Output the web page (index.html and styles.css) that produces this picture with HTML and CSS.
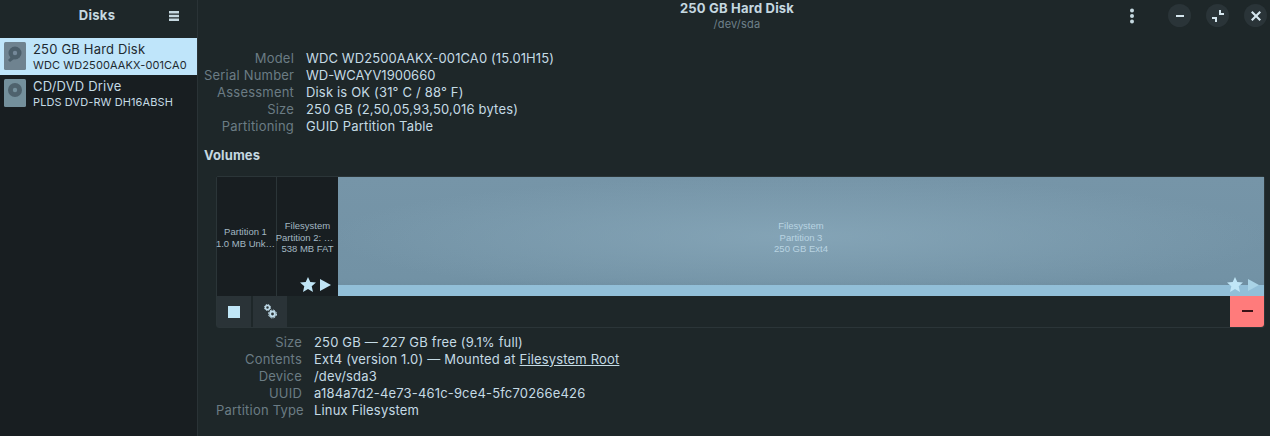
FILE: index.html
```html
<!DOCTYPE html>
<html lang="en">
<head>
  <meta charset="UTF-8" />
  <title>Disks</title>
  <link rel="stylesheet" href="styles.css">
</head>
<body>
  <div class="app">

    <!-- Disk list -->
    <aside class="sidebar">
      <header class="side-head">
        <span class="side-title">Disks</span>
        <svg class="burger" width="10" height="10" viewBox="0 0 10 10"><path d="M0 0h10v2.400H0zM0 3.800h10v2.400H0zM0 7.600h10V10H0z" fill="#c5d8e0"/></svg>
      </header>
      <div class="disk selected">
        <svg class="disk-icon" width="22" height="29" viewBox="0 0 22 29">
          <rect width="22" height="28" rx="1.5" fill="#6f8390"/>
          <circle cx="11" cy="11" r="6.500" fill="#4c5f6b"/>
          <circle cx="11" cy="11" r="2.200" fill="#75899a"/>
          <path d="M7 15l-3 3 2 2 4-3z" fill="#4c5f6b"/>
        </svg>
        <div class="disk-text">
          <div class="disk-name">250 GB Hard Disk</div>
          <div class="disk-model">WDC WD2500AAKX-001CA0</div>
        </div>
      </div>
      <div class="disk">
        <svg class="disk-icon" width="22" height="29" viewBox="0 0 22 29">
          <rect width="22" height="28" rx="1.5" fill="#74909c"/>
          <circle cx="11" cy="11" r="7" fill="#4e626d"/>
          <circle cx="11" cy="11" r="2.200" fill="#74909c"/>
        </svg>
        <div class="disk-text">
          <div class="disk-name">CD/DVD Drive</div>
          <div class="disk-model">PLDS DVD-RW DH16ABSH</div>
        </div>
      </div>
    </aside>

    <main class="main">
      <header class="titlebar">
        <div class="title-text">
          <div class="title">250 GB Hard Disk</div>
          <div class="subtitle">/dev/sda</div>
        </div>
        <div class="win-buttons">
          <svg class="kebab" width="6" height="16" viewBox="0 0 6 16"><circle cx="3" cy="2.500" r="2" fill="#c5d8e0"/><circle cx="3" cy="8" r="2" fill="#c5d8e0"/><circle cx="3" cy="13.500" r="2" fill="#c5d8e0"/></svg>
          <span class="win-btn"><svg width="10" height="10" viewBox="0 0 10 10"><path d="M1 4h8v2H1z" fill="#d5e6ee"/></svg></span>
          <span class="win-btn"><svg width="14" height="14" viewBox="0 0 14 14"><path d="M8 1h2v3h3v2H8zM1 8h5v5H4v-3H1z" fill="#d5e6ee"/></svg></span>
          <span class="win-btn"><svg width="10" height="10" viewBox="0 0 10 10"><path d="M1.500 0L5 3.500 8.500 0 10 1.500 6.500 5 10 8.500 8.500 10 5 6.500 1.500 10 0 8.500 3.500 5 0 1.500z" fill="#d5e6ee"/></svg></span>
        </div>
      </header>

      <section class="content">
        <dl class="props disk-props">
          <dt>Model</dt><dd class="tight">WDC WD2500AAKX-001CA0 (15.01H15)</dd>
          <dt>Serial Number</dt><dd class="caps">WD-WCAYV1900660</dd>
          <dt>Assessment</dt><dd>Disk is OK (31° C / 88° F)</dd>
          <dt>Size</dt><dd>250 GB (2,50,05,93,50,016 bytes)</dd>
          <dt>Partitioning</dt><dd>GUID Partition Table</dd>
        </dl>

        <h2 class="section-title">Volumes</h2>

        <div class="volumes">
          <div class="vol-bar">
            <div class="part part-1">
              <div class="part-label">Partition 1<br>1.0 MB Unk…</div>
            </div>
            <div class="part part-2">
              <div class="part-label">Filesystem<br><span class="clipped">Partition 2: …</span><br>538 MB FAT</div>
              <div class="part-icons">
                <svg width="16" height="15" viewBox="0 0 16 15"><path d="M8 0l2.300 5 5.700.600-4.300 3.700 1.300 5.700L8 12l-5 3 1.300-5.700L0 5.600 5.700 5z" fill="#c0e6f7"/></svg>
                <svg width="11" height="12" viewBox="0 0 11 12"><path d="M0 0l11 6-11 6z" fill="#c0e6f7"/></svg>
              </div>
            </div>
            <div class="part part-3">
              <div class="part-label">Filesystem<br>Partition 3<br>250 GB Ext4</div>
              <div class="part-icons">
                <svg width="16" height="15" viewBox="0 0 16 15"><path d="M8 0l2.300 5 5.700.600-4.300 3.700 1.300 5.700L8 12l-5 3 1.300-5.700L0 5.600 5.700 5z" fill="#c0e6f7"/></svg>
                <svg width="11" height="12" viewBox="0 0 11 12"><path d="M0 0l11 6-11 6z" fill="#a9d3e6"/></svg>
              </div>
              <div class="usage"></div>
            </div>
          </div>
          <div class="vol-tools">
            <span class="tool"><svg width="12" height="12" viewBox="0 0 12 12"><rect width="12" height="12" fill="#c0e6f7"/></svg></span>
            <span class="tool">
              <svg width="13" height="15" viewBox="0 0 13 15">
                <circle cx="3.500" cy="3.500" r="2" fill="none" stroke="#c0dcea" stroke-width="1.500"/>
                <circle cx="3.500" cy="3.500" r="3" fill="none" stroke="#c0dcea" stroke-width="1" stroke-dasharray="1.500 0.860"/>
                <circle cx="8.500" cy="10" r="2.400" fill="none" stroke="#c0dcea" stroke-width="2"/>
                <circle cx="8.500" cy="10" r="4" fill="none" stroke="#c0dcea" stroke-width="1" stroke-dasharray="2 1.140"/>
              </svg>
            </span>
            <span class="tool-fill"></span>
            <span class="tool-delete"><svg width="11" height="3" viewBox="0 0 11 3"><rect width="11" height="2" fill="#3c1216"/></svg></span>
          </div>
        </div>

        <dl class="props vol-props">
          <dt>Size</dt><dd>250 GB — 227 GB free (9.1% full)</dd>
          <dt>Contents</dt><dd>Ext4 (version 1.0) — Mounted at <a class="link" href="#">Filesystem Root</a></dd>
          <dt>Device</dt><dd>/dev/sda3</dd>
          <dt>UUID</dt><dd>a184a7d2-4e73-461c-9ce4-5fc70266e426</dd>
          <dt>Partition Type</dt><dd>Linux Filesystem</dd>
        </dl>
      </section>
    </main>
  </div>
</body>
</html>
```

FILE: styles.css
```css
* {
  box-sizing: border-box;
}

html, body {
  margin: 0;
  height: 100%;
  overflow: hidden;
}

body {
  font-family: Inter, 'Noto Sans', sans-serif;
  font-size: 13px;
  background: #1e2729;
  color: #c5dbe5;
}

.app {
  display: flex;
  height: 436px;
}

.sidebar {
  width: 198px;
  flex: none;
  background: #181e21;
  border-right: 1px solid #2a3336;
}

.side-head {
  height: 38px;
  display: flex;
  align-items: center;
  justify-content: center;
  position: relative;
  background: #1e2729;
  padding-bottom: 8px;
}

.side-title {
  font-weight: 700;
  letter-spacing: 0.3px;
  color: #c5d8e0;
  margin-left: -3px;
}

.burger {
  position: absolute;
  left: 169px;
  top: 11px;
}

.disk {
  height: 37px;
  display: flex;
  align-items: center;
  gap: 7px;
  padding-left: 4px;
}

.disk.selected {
  background: #bfe5fa;
  color: #1e2a30;
}

.disk-name {
  font-size: 13px;
  line-height: 17px;
  letter-spacing: 0.18px;
}

.disk-model {
  font-size: 11px;
  line-height: 14px;
  letter-spacing: 0.1px;
}

.main {
  flex: 1;
  min-width: 0;
}

.titlebar {
  height: 38px;
  display: flex;
  justify-content: center;
  position: relative;
}

.title-text {
  text-align: center;
  padding-top: 1px;
  margin-left: 6px;
}

.title {
  font-weight: 700;
  line-height: 15px;
  letter-spacing: 0.2px;
  color: #c5d8e0;
}

.subtitle {
  font-size: 11px;
  line-height: 16px;
  letter-spacing: 0.2px;
  color: #6f8089;
}

.win-buttons {
  position: absolute;
  right: 3px;
  top: 4px;
  display: flex;
  align-items: center;
  gap: 15px;
}

.kebab {
  margin-right: 18px;
}

.win-btn {
  width: 23px;
  height: 23px;
  border-radius: 50%;
  background: #2a3438;
  display: flex;
  align-items: center;
  justify-content: center;
}

.content {
  padding: 12px 5px 0 6px;
}

.props {
  display: grid;
  margin: 0;
  line-height: 17px;
  column-gap: 12px;
}

.props dt {
  text-align: right;
  white-space: nowrap;
  letter-spacing: 0.2px;
  color: #6b7c84;
}

.props dd {
  margin: 0;
  letter-spacing: 0.17px;
}

.props dd.tight {
  letter-spacing: 0.1px;
}

.props dd.caps {
  letter-spacing: 0;
}

.disk-props {
  grid-template-columns: 90px 1fr;
}

.section-title {
  font-size: 13px;
  font-weight: 700;
  line-height: 17px;
  letter-spacing: 0.1px;
  margin: 12px 0 12px;
  color: #c5d8e0;
}

.volumes {
  margin-left: 12px;
  border: 1px solid #2b3538;
  border-radius: 2px 2px 3px 3px;
}

.vol-bar {
  display: flex;
  height: 119px;
  font-family: 'Liberation Sans', Arial, sans-serif;
  font-size: 9.500px;
  line-height: 11.500px;
  text-align: center;
}

.part {
  position: relative;
  display: flex;
  align-items: center;
  justify-content: center;
  white-space: nowrap;
  padding-top: 2px;
  color: #a3b8c3;
}

.part-1 {
  width: 60px;
  background: #181e21;
  border-right: 1px solid #2b3538;
  padding-right: 2px;
}

.part-2 {
  width: 61px;
  background: #181e21;
}

.clipped {
  display: inline-block;
  margin-right: 6px;
}

.part-3 {
  flex: 1;
  background:
    radial-gradient(ellipse at center, rgba(136, 168, 186, 0.8), rgba(136, 168, 186, 0) 72%),
    linear-gradient(to bottom, #7695a8, #7292a5 85%, #6c8c9f);
  color: #b9d4e2;
}

.part-icons {
  position: absolute;
  right: 7px;
  bottom: 4px;
  display: flex;
  align-items: center;
  gap: 4px;
}

.part-3 .part-icons {
  right: 5px;
  gap: 5px;
  z-index: 1;
}

.usage {
  position: absolute;
  left: 0;
  right: 0;
  bottom: 0;
  height: 11px;
  background: #92bfd8;
}

.vol-tools {
  display: flex;
  height: 31px;
}

.tool {
  width: 34px;
  margin-right: 2px;
  background: #2a3337;
  display: flex;
  align-items: center;
  justify-content: center;
}

.tool-fill {
  flex: 1;
}

.tool-delete {
  width: 34px;
  background: #ff7b7b;
  display: flex;
  align-items: center;
  justify-content: center;
  border-bottom-right-radius: 3px;
}

.vol-props {
  grid-template-columns: 86px 1fr;
  margin: 6px 0 0 12px;
}

.link {
  color: inherit;
  text-decoration: underline;
}
```
